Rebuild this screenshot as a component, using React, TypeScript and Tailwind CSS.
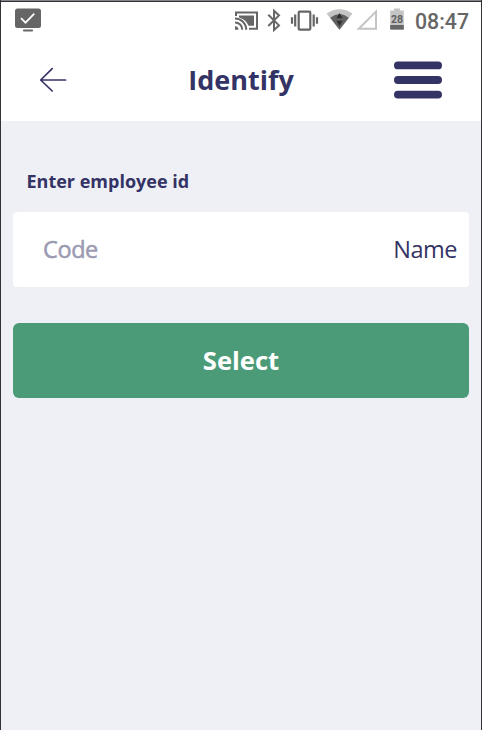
import React from 'react';

function StatusBar() {
  return (
    <div className="flex h-[38px] shrink-0 items-start text-[#666666]">
      <svg className="ml-3 h-9 w-8" viewBox="13 2 32 36">
        <rect x="15" y="8.5" width="26" height="19.5" rx="2.5" fill="currentColor" />
        <rect x="23" y="29.6" width="10" height="1.8" rx="0.9" fill="currentColor" />
        <path d="M21 18.2 25.5 22.7 34.3 13.7" fill="none" stroke="#fff" strokeWidth="1.8" />
      </svg>
      <svg className="ml-[187px] h-9 w-7" viewBox="232 2 28 36" fill="none" stroke="currentColor">
        <path d="M236 16V12.5H257V28.7H249" strokeWidth="2" />
        <path d="M239 15.5H254V25.7H248.5C247 21.5 243.5 18.5 239 17.4Z" fill="currentColor" stroke="none" />
        <path d="M235 18.5A11 11 0 0 1 246.2 29.7M235 22.4A7.3 7.3 0 0 1 242.3 29.7" strokeWidth="2" />
        <path d="M235 26.2A3.5 3.5 0 0 1 238.5 29.7H235Z" fill="currentColor" stroke="none" />
      </svg>
      <svg className="h-9 w-[26px]" viewBox="260 2 26 36" fill="none" stroke="currentColor" strokeWidth="2">
        <path d="M268.3 14.8 279 25.4 274 30V10.8L279 15.4 268.3 26" />
      </svg>
      <svg className="h-9 w-[38px]" viewBox="286 2 38 36" fill="none" stroke="currentColor" strokeWidth="2.2">
        <rect x="298.7" y="11.7" width="11.6" height="18" rx="1" />
        <path d="M295.2 14.5V26.5M292 17.2V23.7M313.7 14.5V26.5M317 17.2V23.7" />
      </svg>
      <svg className="h-9 w-[30px]" viewBox="324 2 30 36">
        <path d="M326.5 13.5Q339.5 5 352.5 13.5L339.5 29.7Z" fill="#c4c4c4" />
        <path d="M330.2 17.7Q339.5 10.5 348.8 17.7L339.5 29.7Z" fill="#626262" />
        <path d="M336.3 18.2 339.5 13 342.7 18.2ZM336.3 20.8H342.7L339.5 26Z" fill="#303030" />
      </svg>
      <svg className="h-9 w-7" viewBox="354 2 28 36">
        <path d="M358.8 28.8 376 11.6V28.8Z" fill="none" stroke="#c4c4c4" strokeWidth="2" />
      </svg>
      <svg className="h-9 w-7" viewBox="382 2 28 36">
        <path d="M394 8.5H400V10.5H403.8V29.6H390.2V10.5H394Z" fill="#c4c4c4" />
        <path d="M390.2 25H403.8V29.6H390.2Z" fill="#666" />
        <text x="397" y="23.2" textAnchor="middle" fill="#5f5f5f" fontSize="10.5" className="font-['Roboto',sans-serif] font-bold">28</text>
      </svg>
      <span className="ml-[5px] mt-[7px] font-['Roboto',sans-serif] text-[21.3px] leading-[26px] font-medium whitespace-nowrap">08:47</span>
    </div>
  );
}

function Header() {
  return (
    <header className="grid h-[81px] shrink-0 grid-cols-[1fr_auto_1fr] items-center pb-[2px]">
      <button aria-label="Back" className="ml-[38px] h-7 w-7">
        <svg className="h-7 w-7" viewBox="39 66 28 28" fill="none" stroke="currentColor" strokeWidth="1.7" strokeLinecap="round" strokeLinejoin="round">
          <path d="M65.5 80H40.7M52.2 68.7 40.7 80 52.2 91" />
        </svg>
      </button>
      <h1 className="text-[27px] leading-9 font-bold">Identify</h1>
      <button aria-label="Menu" className="mt-px mr-[39px] h-[38px] w-12 justify-self-end">
        <svg className="h-[38px] w-12" viewBox="0 0 48 38" stroke="currentColor" strokeWidth="7.8" strokeLinecap="round">
          <path d="M3.9 4.4H44.1M3.9 19H44.1M3.9 33.6H44.1" />
        </svg>
      </button>
    </header>
  );
}

export default function App() {
  return (
    <div className="flex h-[730px] w-[482px] flex-col overflow-hidden border-x border-[#333236] bg-white font-['Open_Sans',sans-serif] text-[#343365]">
      <div className="h-[2px] shrink-0 border-b border-[#333236] bg-[#858387]" />
      <StatusBar />
      <Header />
      <main className="flex-1 bg-[#eff0f6] px-3 pt-[47px]">
        <label className="ml-[13.5px] block text-[18px] leading-[26px] font-bold">Enter employee id</label>
        <div className="mt-[18px] flex h-[75px] items-center justify-between rounded-[4px] bg-white pr-3 pl-[30px] text-[23.5px]">
          <span className="tracking-[-0.4px] text-[#9b9ab3] [-webkit-text-stroke:0.5px_#9b9ab3]">Code</span>
          <span className="tracking-[-0.5px]">Name</span>
        </div>
        <button className="mt-9 flex h-[75px] w-full items-center justify-center rounded-[6px] bg-[#4b9b78] pt-[2px] text-[25.6px] font-bold text-white">
          Select
        </button>
      </main>
    </div>
  );
}
